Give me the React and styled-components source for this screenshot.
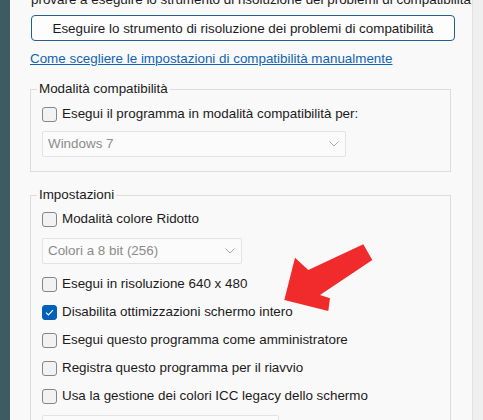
import React from 'react';
import styled, { createGlobalStyle } from 'styled-components';

const GlobalStyle = createGlobalStyle`
    html, body {
        margin: 0;
        padding: 0;
        background: #f9f9f9;
        overflow: hidden;
    }
    body {
        font-family: "Liberation Sans", Arial, sans-serif;
        font-size: 13.4px;
        color: #1b1b1b;
    }
`;

const Page = styled.div`
    position: relative;
    width: 483px;
    height: 420px;
    display: flex;
    overflow: hidden;
`;

const Strip = styled.div`
    width: 10px;
    flex: none;
    background: #3c5b63;
`;

const Gutter = styled.div`
    width: 10px;
    flex: none;
    background: #efefef;
`;

const Panel = styled.div`
    flex: 1;
    min-width: 0;
    background: #f9f9f9;
    border-right: 1px solid #e2e2e2;
    padding: 0 17px 0 20px;
    overflow: hidden;
    line-height: 16px;
`;

const Intro = styled.div`
    margin-top: -8px;
    margin-left: 1px;
    white-space: nowrap;
`;

const TroubleButton = styled.button`
    display: block;
    box-sizing: border-box;
    width: 424px;
    height: 26px;
    margin: 7px 0 0 1px;
    padding: 0;
    border: 1px solid #235e8f;
    border-radius: 4px;
    background: #fdfdfd;
    font-family: inherit;
    font-size: 13.4px;
    color: #1b1b1b;
`;

const HelpLink = styled.a`
    display: block;
    margin-top: 10px;
    color: #0f64b4;
    text-decoration: underline;
    white-space: nowrap;
`;

const Group = styled.fieldset`
    box-sizing: border-box;
    width: 421px;
    margin: ${p => p.$top}px 0 0 0;
    padding: 0 0 ${p => p.$bottom}px 11px;
    border: 1px solid #dcdcdc;
    min-width: 0;
`;

const Legend = styled.legend`
    margin-left: -5px;
    padding: 0 2px;
    line-height: 16px;
`;

const Row = styled.label`
    display: flex;
    align-items: center;
    gap: 5px;
    height: 20px;
    margin-top: ${p => p.$top}px;
    white-space: nowrap;
`;

const Box = styled.span`
    box-sizing: border-box;
    width: 15px;
    height: 15px;
    flex: none;
    border-radius: 3px;
    border: 1px solid ${p => (p.$checked ? '#005fb8' : '#868686')};
    background: ${p => (p.$checked ? '#005fb8' : '#f2f2f2')};
    display: flex;
    align-items: center;
    justify-content: center;
`;

const Select = styled.div`
    box-sizing: border-box;
    width: ${p => p.$width}px;
    height: 26px;
    margin-top: ${p => p.$top}px;
    padding: 0 6px 0 5px;
    border: 1px solid #e3e3e3;
    border-radius: 2px;
    background: #fbfbfb;
    color: #8c8c8c;
    display: flex;
    align-items: center;
    justify-content: space-between;
`;

const Overlay = styled.svg`
    position: absolute;
    left: 0;
    top: 0;
    pointer-events: none;
`;

function Check({ label, checked, top }) {
    return (
        <Row $top={top}>
            <Box $checked={checked}>
                {checked && (
                    <svg width="9" height="7" viewBox="0 0 9 7">
                        <path d="M1 3.6 L3.4 6 L8 1.2" fill="none" stroke="#fff" strokeWidth="1.1" />
                    </svg>
                )}
            </Box>
            <span>{label}</span>
        </Row>
    );
}

function Dropdown({ value, width, top }) {
    return (
        <Select $width={width} $top={top}>
            <span>{value}</span>
            <svg width="10" height="6" viewBox="0 0 10 6">
                <path d="M0.5 0.5 L5 5 L9.5 0.5" fill="none" stroke="#a9a9a9" strokeWidth="1" />
            </svg>
        </Select>
    );
}

export default function App() {
    return (
        <>
            <GlobalStyle />
            <Page>
                <Strip />
                <Panel>
                    <Intro>provare a eseguire lo strumento di risoluzione dei problemi di compatibilità</Intro>
                    <TroubleButton>Eseguire lo strumento di risoluzione dei problemi di compatibilità</TroubleButton>
                    <HelpLink href="#">Come scegliere le impostazioni di compatibilità manualmente</HelpLink>

                    <Group $top={14} $bottom={14}>
                        <Legend>Modalità compatibilità</Legend>
                        <Check top={7} label="Esegui il programma in modalità compatibilità per:" />
                        <Dropdown top={7} width={304} value="Windows 7" />
                    </Group>

                    <Group $top={15} $bottom={20}>
                        <Legend>Impostazioni</Legend>
                        <Check top={6} label="Modalità colore Ridotto" />
                        <Dropdown top={9} width={200} value="Colori a 8 bit (256)" />
                        <Check top={10} label="Esegui in risoluzione 640 x 480" />
                        <Check top={8} checked label="Disabilita ottimizzazioni schermo intero" />
                        <Check top={8} label="Esegui questo programma come amministratore" />
                        <Check top={8} label="Registra questo programma per il riavvio" />
                        <Check top={8} label="Usa la gestione dei colori ICC legacy dello schermo" />
                        <Dropdown top={9} width={237} value="" />
                    </Group>
                </Panel>
                <Gutter />
                <Overlay width="483" height="420" viewBox="0 0 483 420">
                    <polygon
                        points="363.3,244.3 372.3,260 320,295 330,298.3 328.3,311 284.3,300 295,257.7 308.3,270"
                        fill="#f12b2b"
                    />
                </Overlay>
            </Page>
        </>
    );
}
